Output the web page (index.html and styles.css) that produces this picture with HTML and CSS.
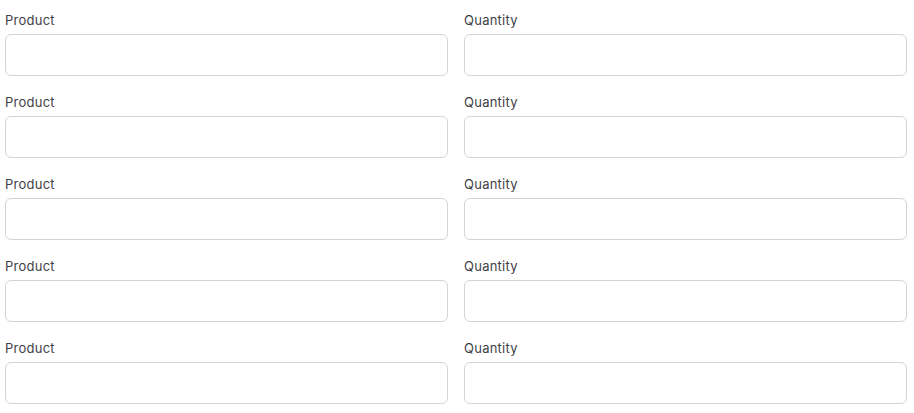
FILE: index.html
```html
<!DOCTYPE html>
<html>
<head>
<meta charset="utf-8">
<link rel="stylesheet" href="styles.css">
</head>
<body>
<form class="form">
  <div class="field"><label class="label">Product</label><input class="input" type="text"></div>
  <div class="field"><label class="label">Quantity</label><input class="input" type="text"></div>
  <div class="field"><label class="label">Product</label><input class="input" type="text"></div>
  <div class="field"><label class="label">Quantity</label><input class="input" type="text"></div>
  <div class="field"><label class="label">Product</label><input class="input" type="text"></div>
  <div class="field"><label class="label">Quantity</label><input class="input" type="text"></div>
  <div class="field"><label class="label">Product</label><input class="input" type="text"></div>
  <div class="field"><label class="label">Quantity</label><input class="input" type="text"></div>
  <div class="field"><label class="label">Product</label><input class="input" type="text"></div>
  <div class="field"><label class="label">Quantity</label><input class="input" type="text"></div>
</form>
</body>
</html>
```
FILE: styles.css
```css
html, body {
  margin: 0;
  padding: 0;
  background: #ffffff;
}
body {
  font-family: Inter, "Noto Sans", sans-serif;
}
.form {
  display: grid;
  grid-template-columns: 443px 443px;
  column-gap: 16px;
  row-gap: 16px;
  padding: 10px 7px 0 5px;
}
.field {
  display: flex;
  flex-direction: column;
}
.label {
  font-size: 13px;
  line-height: 20px;
  letter-spacing: 0.25px;
  color: #3f3f46;
  margin-bottom: 4px;
}
.input {
  box-sizing: border-box;
  height: 42px;
  width: 100%;
  border: 1px solid #d4d4d8;
  border-radius: 6px;
  background: #ffffff;
  margin: 0;
  padding: 0 10px;
  font: inherit;
  outline: none;
}
```
